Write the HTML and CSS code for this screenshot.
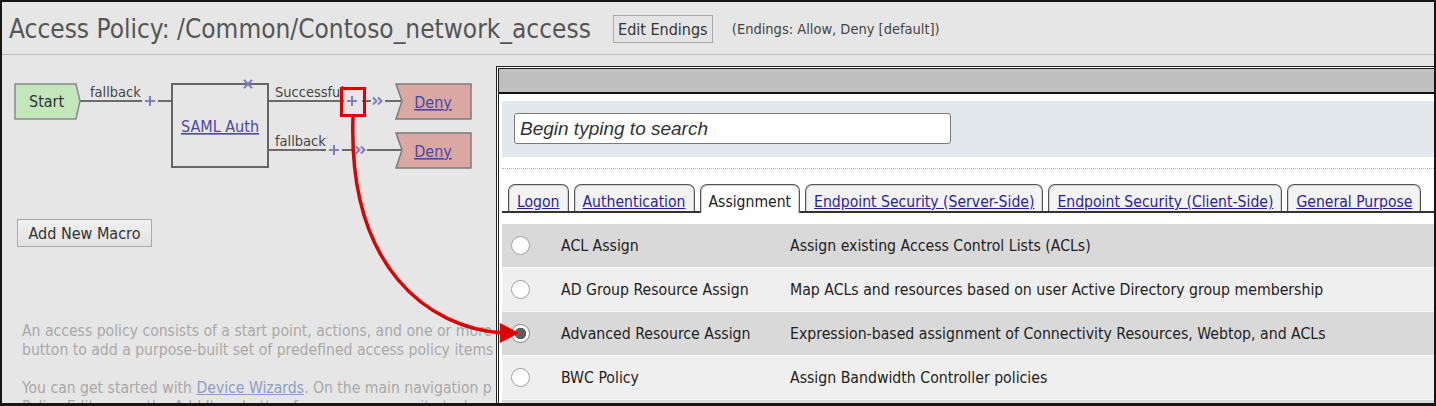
FILE: index.html
```html
<!DOCTYPE html>
<html lang="en">
<head>
<meta charset="utf-8">
<title>Access Policy</title>
<link rel="stylesheet" href="styles.css">
</head>
<body>
<div class="frame">
  <header class="head">
    <h1 class="title">Access Policy: /Common/Contoso_network_access</h1>
    <button class="btn edit">Edit Endings</button>
    <span class="endings">(Endings: Allow, Deny [default])</span>
  </header>

  <div class="diagram">
    <svg width="494" height="150" viewBox="2 55 494 150" xmlns="http://www.w3.org/2000/svg">
      <g class="wire">
        <line x1="80" y1="101" x2="142" y2="101"/>
        <line x1="158" y1="101" x2="172" y2="101"/>
        <line x1="268" y1="101" x2="344" y2="101"/>
        <line x1="362" y1="101" x2="371" y2="101"/>
        <line x1="385" y1="101" x2="401" y2="101"/>
        <line x1="268" y1="150" x2="326" y2="150"/>
        <line x1="342" y1="150" x2="354" y2="150"/>
        <line x1="367" y1="150" x2="401" y2="150"/>
      </g>
      <polygon class="start" points="15,84 76,84 80,101 76,119 15,119"/>
      <text class="lbl" x="29" y="107">Start</text>
      <rect class="node" x="172" y="84" width="96" height="83"/>
      <text class="link" x="220" y="132" text-anchor="middle">SAML Auth</text>
      <text class="lbl sm" x="90" y="97">fallback</text>
      <text class="lbl sm" x="275" y="97">Successful</text>
      <text class="lbl sm" x="275" y="146">fallback</text>
      <g class="ctl">
        <path d="M145,101 H155 M150,96 V106"/>
        <path d="M347,101 H357 M352,96 V106"/>
        <path d="M329,150 H339 M334,145 V155"/>
        <path d="M244,80 L252,88 M252,80 L244,88"/>
        <path d="M373,97.5 L376.5,101 L373,104.5 M378,97.5 L381.5,101 L378,104.5"/>
        <path d="M356,146.5 L359.5,150 L356,153.5 M361,146.5 L364.5,150 L361,153.5"/>
      </g>
      <polygon class="deny" points="396,84 471,84 471,119 396,119 402,101"/>
      <polygon class="deny" points="396,133 471,133 471,168 396,168 402,150"/>
      <text class="link" x="433" y="108" text-anchor="middle">Deny</text>
      <text class="link" x="433" y="157" text-anchor="middle">Deny</text>
      <rect class="hilite" x="341.5" y="88.5" width="23" height="27"/>
    </svg>
  </div>

  <button class="btn macro">Add New Macro</button>

  <div class="intro">
    <p>An access policy consists of a start point, actions, and one or more<br>button to add a purpose-built set of predefined access policy items</p>
    <p>You can get started with <a href="#">Device Wizards</a>. On the main navigation p<br>Policy Editor, use the Add Item button for common security tasks</p>
  </div>

  <section class="dialog">
    <div class="dlg-bar"></div>
    <div class="dlg-body">
      <div class="search">
        <input class="search-input" type="text" placeholder="Begin typing to search">
      </div>
      <div class="dots"></div>
      <nav class="tabs">
        <a class="tab" href="#">Logon</a>
        <a class="tab" href="#">Authentication</a>
        <span class="tab active">Assignment</span>
        <a class="tab" href="#">Endpoint Security (Server-Side)</a>
        <a class="tab" href="#">Endpoint Security (Client-Side)</a>
        <a class="tab" href="#">General Purpose</a>
      </nav>
      <div class="items">
        <div class="item dark"><span class="radio"></span><span>ACL Assign</span><span>Assign existing Access Control Lists (ACLs)</span></div>
        <div class="item"><span class="radio"></span><span>AD Group Resource Assign</span><span>Map ACLs and resources based on user Active Directory group membership</span></div>
        <div class="item dark"><span class="radio on"></span><span>Advanced Resource Assign</span><span>Expression-based assignment of Connectivity Resources, Webtop, and ACLs</span></div>
        <div class="item"><span class="radio"></span><span>BWC Policy</span><span>Assign Bandwidth Controller policies</span></div>
        <div class="item dark"><span class="radio"></span><span>Citrix Smart Access</span><span>Assign Citrix Smart Access filters</span></div>
      </div>
    </div>
  </section>

  <svg class="arrow" width="1432" height="401" viewBox="2 2 1432 401" xmlns="http://www.w3.org/2000/svg">
    <path d="M353,117 C348,268 428,328 503,333" fill="none" stroke="#e00000" stroke-width="3.5"/>
    <polygon points="500,323 519,333 500,343" fill="#e00000"/>
  </svg>
</div>
</body>
</html>
```
FILE: styles.css
```css
* { box-sizing: border-box; }
html, body { margin: 0; padding: 0; }
body {
  width: 1436px;
  height: 406px;
  overflow: hidden;
  background: #fff;
  font-family: "DejaVu Sans Condensed", "DejaVu Sans", sans-serif;
}
.frame {
  position: relative;
  width: 1436px;
  height: 406px;
  border: 2px solid #161616;
  border-bottom-width: 3px;
  background: #e6e6e6;
  overflow: hidden;
}
.head {
  display: flex;
  align-items: center;
  height: 53px;
  padding: 2px 0 0 7px;
  border-bottom: 1px solid #bcbcbc;
}
.title {
  margin: 0;
  font-weight: normal;
  font-size: 26px;
  color: #555;
}
.btn {
  font-family: inherit;
  color: #333;
  border: 1px solid #a9a9a9;
  background: linear-gradient(#f0f0f0, #e2e2e2);
  padding: 0;
  cursor: pointer;
}
.edit {
  margin-left: 22px;
  width: 100px;
  height: 28px;
  font-size: 16px;
  background: #e4e4e4;
}
.endings {
  margin-left: 19px;
  font-size: 14.5px;
  color: #444;
}
.diagram { height: 150px; }
.diagram svg { display: block; }
.wire line { stroke: #6b6b6b; stroke-width: 2; }
.start { fill: #c4e6bd; stroke: #8a8a8a; stroke-width: 1.5; }
.node { fill: #e6e6e6; stroke: #666; stroke-width: 2; }
.deny { fill: #dba7a2; stroke: #7c7c7c; stroke-width: 1.5; }
.lbl { font-size: 16px; fill: #333; }
.lbl.sm { font-size: 14.5px; fill: #444; }
.link { font-size: 16px; fill: #4a48a8; text-decoration: underline; }
.ctl path { stroke: #7d7dc4; stroke-width: 2; fill: none; }
.hilite { fill: none; stroke: #e00000; stroke-width: 3; }
.macro {
  display: block;
  margin: 14px 0 0 15px;
  width: 135px;
  height: 28px;
  font-size: 16px;
}
.intro {
  margin: 75px 0 0 20px;
  width: 474px;
  overflow: hidden;
  font-size: 15.6px;
  line-height: 19px;
  color: #a9a9a9;
}
.intro p { margin: 0 0 19px; white-space: nowrap; }
.intro a { color: #8d9cc2; }
.dialog {
  position: absolute;
  left: 494px;
  top: 64px;
  right: 0;
  bottom: 0;
  background: #fff;
  border-left: 3px double #222;
  border-top: 3px double #222;
}
.dlg-bar {
  height: 25px;
  background: #c0c0c0;
  border-bottom: 2px solid #111;
}
.dlg-body { padding: 7px 0 0 3px; }
.search {
  height: 56px;
  padding: 12px;
  background: #e3e8ed;
}
.search-input {
  display: block;
  width: 437px;
  height: 31px;
  border: 1px solid #7a7a7a;
  border-radius: 3px;
  padding: 0 5px;
  font-family: "Liberation Sans", Arial, sans-serif;
  font-style: italic;
  font-size: 19px;
  color: #333;
  background: #fff;
}
.search-input::placeholder { color: #333; opacity: 1; }
.dots {
  margin-top: 11px;
  border-top: 1px dotted #b4b4b4;
}
.tabs {
  display: flex;
  gap: 5px;
  margin-top: 16px;
  padding-left: 6px;
  border-bottom: 2px solid #333;
  height: 28px;
  align-items: flex-end;
}
.tab {
  display: block;
  height: 27px;
  padding: 8px 8px 0 8px;
  font-size: 15.6px;
  line-height: 19px;
  color: #2a1ea8;
  background: #f3f3f3;
  border: 1px solid #555;
  border-bottom: none;
  border-radius: 7px 7px 0 0;
  box-shadow: inset 1px 1px 0 #d0d0d0, inset -1px 0 0 #d0d0d0;
  white-space: nowrap;
}
.tab.active {
  color: #222;
  background: #fff;
  height: 29px;
  margin-bottom: -2px;
}
.items { margin-top: 11px; }
.item {
  display: grid;
  grid-template-columns: 59px 229px 1fr;
  align-items: center;
  height: 44px;
  font-size: 15.7px;
  color: #222;
  background: #efefef;
  border-bottom: 1px solid #f7f7f7;
}
.item.dark { background: #d9d9d9; }
.radio {
  display: block;
  margin-left: 9px;
  width: 19px;
  height: 19px;
  border-radius: 50%;
  border: 1px solid #a0a0a0;
  background: #fff;
}
.radio.on {
  background: radial-gradient(circle, #5e5e5e 0 5.5px, #fff 6px);
  border-color: #888;
}
.arrow {
  position: absolute;
  left: 0;
  top: 0;
  pointer-events: none;
}
```
